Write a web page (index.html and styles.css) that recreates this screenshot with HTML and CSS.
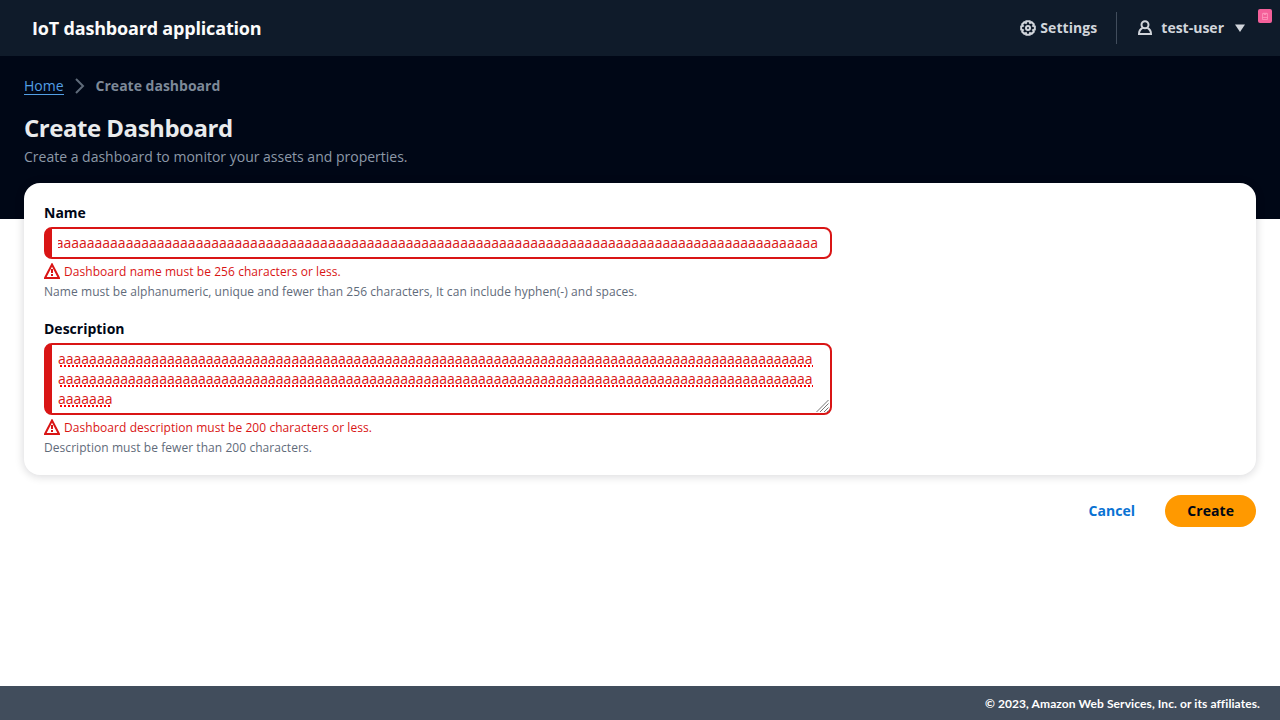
FILE: index.html
```html
<!DOCTYPE html>
<html lang="en">
<head>
<meta charset="utf-8">
<title>IoT dashboard application</title>
<link rel="stylesheet" href="styles.css">
</head>
<body>
<div class="app">
  <header class="topbar">
    <div class="app-title">IoT dashboard application</div>
    <div class="utilities">
      <div class="settings">
        <svg class="icon gear" viewBox="0 0 16 16"><path d="M6.300 1.200h3.400l.4 1.600 1.600-.6 2.100 2.100-.7 1.500 1.700.6v3.200l-1.700.6.7 1.500-2.100 2.100-1.600-.6-.4 1.600H6.300l-.4-1.600-1.600.6-2.100-2.100.7-1.500-1.700-.6V6.400l1.700-.6-.7-1.500 2.100-2.100 1.600.6z"/><circle cx="8" cy="8" r="2"/></svg>
        <span>Settings</span>
      </div>
      <div class="divider"></div>
      <div class="user">
        <svg class="icon" viewBox="0 0 16 16"><circle cx="8" cy="4.700" r="3.500"/><path d="M5.600 7.800C3.300 9 2 11.200 2 14h12c0-2.800-1.300-5-3.600-6.200"/></svg>
        <span class="user-name">test-user</span>
        <svg class="icon caret" viewBox="0 0 16 16"><path d="M3 4.500h10L8 12z"/></svg>
      </div>
    </div>
    <div class="badge"><svg viewBox="0 0 14 14"><path d="M4.500 4.500h5v6h-5zM4.500 8.500h5M6 3.500v2h2v-2"/></svg></div>
  </header>
  <section class="hero">
    <nav class="crumbs">
      <a class="home">Home</a>
      <svg class="icon chevron" viewBox="0 0 16 16"><path d="M4 1l7 7-7 7"/></svg>
      <span class="current">Create dashboard</span>
    </nav>
    <h1>Create Dashboard</h1>
    <p class="subtitle">Create a dashboard to monitor your assets and properties.</p>
  </section>
  <main>
    <div class="card">
      <div class="label">Name</div>
      <div class="field input"><div class="clip"><span>aaaaaaaaaaaaaaaaaaaaaaaaaaaaaaaaaaaaaaaaaaaaaaaaaaaaaaaaaaaaaaaaaaaaaaaaaaaaaaaaaaaaaaaaaaaaaaaaaa</span></div></div>
      <div class="error"><svg class="icon" viewBox="0 0 16 16"><path d="M8 1.500L15 15H1zM8 6v4M8 11v2"/></svg><span>Dashboard name must be 256 characters or less.</span></div>
      <div class="hint">Name must be alphanumeric, unique and fewer than 256 characters, It can include hyphen(-) and spaces.</div>
      <div class="label second">Description</div>
      <div class="field area">
        <div><span class="misspelled">aaaaaaaaaaaaaaaaaaaaaaaaaaaaaaaaaaaaaaaaaaaaaaaaaaaaaaaaaaaaaaaaaaaaaaaaaaaaaaaaaaaaaaaaaaaaaaaaa</span></div>
        <div><span class="misspelled">aaaaaaaaaaaaaaaaaaaaaaaaaaaaaaaaaaaaaaaaaaaaaaaaaaaaaaaaaaaaaaaaaaaaaaaaaaaaaaaaaaaaaaaaaaaaaaaaa</span></div>
        <div><span class="misspelled">aaaaaaa</span></div>
        <svg class="grip" viewBox="0 0 14 14"><path d="M.5 13L12.500 1M4 13l8.500-8.500M8 13l4.500-4.500M11 13l1.500-1.500"/></svg>
      </div>
      <div class="error"><svg class="icon" viewBox="0 0 16 16"><path d="M8 1.500L15 15H1zM8 6v4M8 11v2"/></svg><span>Dashboard description must be 200 characters or less.</span></div>
      <div class="hint">Description must be fewer than 200 characters.</div>
    </div>
    <div class="actions"><button class="btn cancel">Cancel</button><button class="btn create">Create</button></div>
  </main>
  <footer><span>© 2023, Amazon Web Services, Inc. or its affiliates.</span></footer>
</div>
</body>
</html>
```
FILE: styles.css
```css
* { box-sizing: border-box; }
body { margin: 0; font: 14px/20px "Open Sans", sans-serif; color: #000716; background: #fff; }
.app { height: 720px; display: flex; flex-direction: column; overflow: hidden; }
.icon { width: 16px; height: 16px; flex: none; fill: none; stroke: currentColor; stroke-width: 2; display: block; }
.topbar { position: relative; height: 56px; flex: none; display: flex; align-items: center; justify-content: space-between; background: #0f1b2a; padding: 0 32px; }
.app-title { font-size: 18px; font-weight: 700; line-height: 22px; letter-spacing: -0.01em; color: #fbfbfb; }
.utilities { display: flex; align-items: center; color: #d1d5db; font-weight: 700; }
.settings { display: flex; align-items: center; gap: 4px; }
.settings span { letter-spacing: 0.07px; }
.divider { width: 1px; height: 32px; margin: 0 20px 0 19px; background: #414d5c; }
.user { display: flex; align-items: center; }
.user-name { margin: 0 8px; }
.caret { fill: currentColor; stroke: none; }
.badge { position: absolute; left: 1258px; top: 9px; width: 14px; height: 14px; border-radius: 2px; background: #f4609a; }
.badge svg { display: block; fill: none; stroke: #ff9fc2; stroke-width: 0.7; }
.hero { height: 163px; flex: none; padding: 20px 24px 0; background: #000716; }
.crumbs { display: flex; align-items: center; gap: 8px; height: 20px; }
.home { color: #539fe5; height: 19px; line-height: 20px; margin-top: -1px; border-bottom: 1px solid; }
.chevron { color: #5f6b7a; }
.current { color: #7d8998; font-weight: 700; }
h1 { margin: 17px 0 0; font-size: 24px; line-height: 30px; font-weight: 700; letter-spacing: -0.02em; color: #e9ebed; }
.subtitle { margin: 4px 0 0; color: #8d99a8; }
main { flex: 1; padding: 0 24px; margin-top: -36px; }
.card { height: 292px; padding: 20px; border-radius: 16px; background: #fff; box-shadow: 0 1px 8px 1px rgba(0, 7, 22, 0.14); }
.label { font-weight: 700; height: 20px; margin-bottom: 4px; }
.second { margin-top: 19px; }
.field { width: 788px; border: 2px solid #d91515; border-left-width: 8px; border-radius: 8px; color: #d91515; background: #fff; }
.input { height: 32px; padding: 4px 12px 4px 6px; }
.clip { display: flex; justify-content: flex-end; overflow: hidden; }
.area { position: relative; height: 72px; padding: 4px 6px; }
.area div { height: 20px; }
.misspelled { display: inline-block; height: 20px; background: repeating-linear-gradient(90deg, transparent 0 2px, #f00 2px 4px) 0 16px / 100% 2px no-repeat; }
.grip { position: absolute; right: 0; bottom: 0; width: 14px; height: 14px; fill: none; stroke: #777; stroke-width: 1; }
.error { display: flex; gap: 4px; height: 16px; margin-top: 4px; font-size: 12px; line-height: 18px; letter-spacing: 0.005em; color: #d91515; }
.hint { margin-top: 5px; font-size: 12px; line-height: 16px; letter-spacing: 0.005em; color: #5f6b7a; }
.actions { display: flex; justify-content: flex-end; gap: 8px; margin-top: 20px; }
.btn { height: 32px; border: 0; border-radius: 16px; padding: 0 22px; background: none; font: 700 14px/20px "Open Sans", sans-serif; letter-spacing: 0.07px; }
.cancel { color: #0972d3; }
.create { background: #ff9900; color: #000716; }
footer { height: 34px; flex: none; display: flex; align-items: center; justify-content: flex-end; padding: 2px 20px 0; background: #414d5c; color: #fff; font: 700 12px/16px Lato, sans-serif; letter-spacing: 0.09px; }
```
